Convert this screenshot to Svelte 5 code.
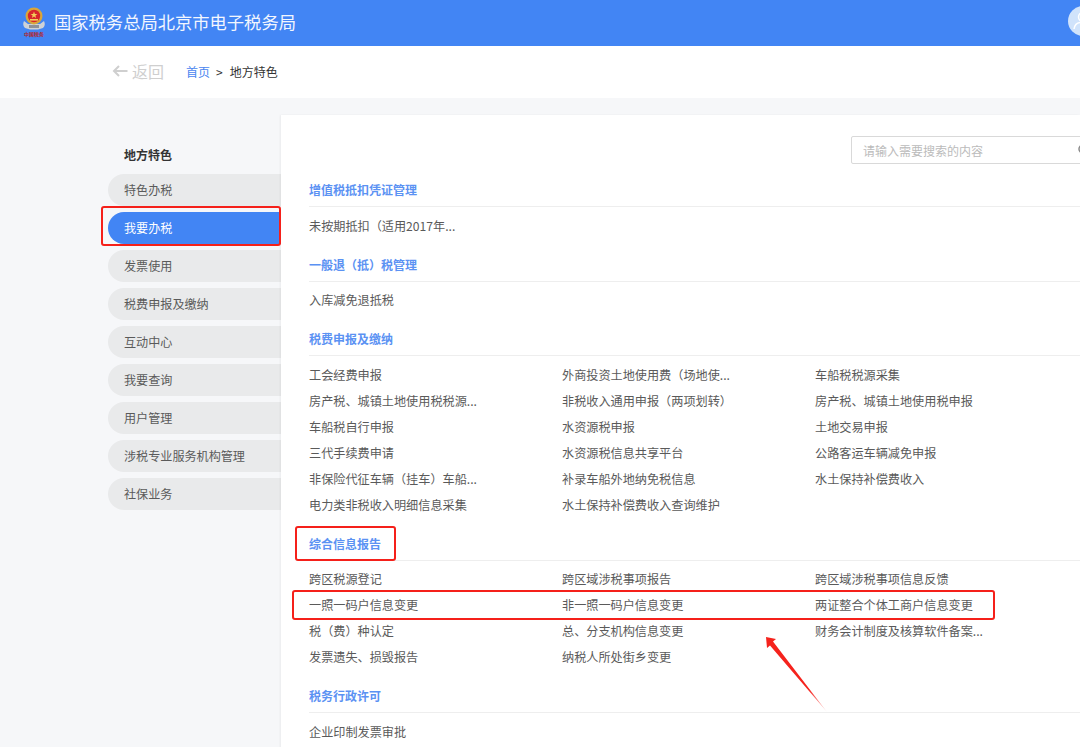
<script>
const menu = ['特色办税', '我要办税', '发票使用', '税费申报及缴纳', '互动中心', '我要查询', '用户管理', '涉税专业服务机构管理', '社保业务'];

const sections = [
  { title: '增值税抵扣凭证管理', items: ['未按期抵扣（适用2017年...'] },
  { title: '一般退（抵）税管理', items: ['入库减免退抵税'] },
  {
    title: '税费申报及缴纳',
    items: [
      '工会经费申报', '外商投资土地使用费（场地使...', '车船税税源采集',
      '房产税、城镇土地使用税税源...', '非税收入通用申报（两项划转）', '房产税、城镇土地使用税申报',
      '车船税自行申报', '水资源税申报', '土地交易申报',
      '三代手续费申请', '水资源税信息共享平台', '公路客运车辆减免申报',
      '非保险代征车辆（挂车）车船...', '补录车船外地纳免税信息', '水土保持补偿费收入',
      '电力类非税收入明细信息采集', '水土保持补偿费收入查询维护'
    ]
  },
  {
    title: '综合信息报告',
    items: [
      '跨区税源登记', '跨区域涉税事项报告', '跨区域涉税事项信息反馈',
      '一照一码户信息变更', '非一照一码户信息变更', '两证整合个体工商户信息变更',
      '税（费）种认定', '总、分支机构信息变更', '财务会计制度及核算软件备案...',
      '发票遗失、损毁报告', '纳税人所处街乡变更'
    ]
  },
  { title: '税务行政许可', items: ['企业印制发票审批'] }
];
</script>

<div class="page">
  <header class="top">
    <svg class="emblem" width="30" height="36" viewBox="0 0 30 36">
      <path d="M5 16 Q3 20 6 23 L11 24.5 L19 24.5 L24 23 Q27 20 25 16 L21 19 L9 19 Z" fill="#cfd2d6" />
      <circle cx="15" cy="11" r="8.5" fill="#d9a63a" />
      <circle cx="15" cy="11" r="6.2" fill="#d8262c" />
      <path d="M15 6.5 L15.9 9 L18.4 9 L16.4 10.5 L17.1 13 L15 11.5 L12.9 13 L13.6 10.5 L11.6 9 L14.1 9 Z" fill="#f3cf5a" />
      <rect x="11" y="14" width="8" height="1.6" fill="#f3cf5a" />
      <rect x="10" y="20" width="10" height="3" fill="#8d9199" />
      <text x="15" y="31" text-anchor="middle" class="emblem-text">中国税务</text>
    </svg>
    <h1>国家税务总局北京市电子税务局</h1>
    <div class="avatar">
      <svg width="30" height="30" viewBox="0 0 30 30">
        <circle cx="15" cy="11" r="4.5" fill="none" stroke="#fff" stroke-width="1.5" />
        <path d="M6 23 Q7 17 12 16.5 M18 16.5 Q23 17 24 23 Z" fill="none" stroke="#fff" stroke-width="1.5" />
      </svg>
    </div>
  </header>

  <div class="crumbs">
    <span class="back">
      <svg width="16" height="12" viewBox="0 0 16 12">
        <path d="M15.5 6 H2 M7 1 L2 6 L7 11" fill="none" stroke="#cfcfcf" stroke-width="2" />
      </svg>
      返回
    </span>
    <span class="path"><a href="#top">首页</a><i>&gt;</i><b>地方特色</b></span>
  </div>

  <main>
    <aside>
      <h2>地方特色</h2>
      {#each menu as name, i}
        <div class="pill" class:active={i === 1}>{name}</div>
      {/each}
    </aside>

    <section class="panel">
      <div class="search">
        <input placeholder="请输入需要搜索的内容" />
        <svg width="10" height="12" viewBox="0 0 10 12">
          <circle cx="6" cy="5" r="4" fill="none" stroke="#888" stroke-width="1.5" />
        </svg>
      </div>

      {#each sections as sec}
        <div class="group">
          <h3>{sec.title}</h3>
          <div class="items">
            {#each sec.items as item}
              <span>{item}</span>
            {/each}
          </div>
        </div>
      {/each}
    </section>
  </main>

  <!-- red marks drawn over the screenshot -->
  <div class="mark mark-menu"></div>
  <div class="mark mark-title"></div>
  <div class="mark mark-row"></div>
  <svg class="arrow" width="70" height="85" viewBox="0 0 70 85">
    <defs>
      <linearGradient id="fade" x1="0" y1="0" x2="1" y2="1">
        <stop offset="0" stop-color="#f5231d" />
        <stop offset="0.7" stop-color="#f5231d" />
        <stop offset="1" stop-color="#f5231d" stop-opacity="0.15" />
      </linearGradient>
    </defs>
    <path d="M1 1 L11 3 L8 5.5 L62 76 L5 9.5 L2 12 Z" fill="url(#fade)" />
  </svg>
</div>

<style>
  :global(body) {
    background: #fff;
    font-family: "Noto Sans CJK SC", "Liberation Sans", sans-serif;
  }

  .page {
    position: relative;
    width: 1080px;
    height: 747px;
    overflow: hidden;
    background: #f6f7f9;
  }

  .top {
    display: flex;
    align-items: center;
    height: 46px;
    padding-left: 19px;
    background: #4285f4;
  }

  .emblem {
    flex: none;
    margin-right: 5px;
  }

  .emblem-text {
    font-family: "Noto Sans CJK SC", sans-serif;
    font-size: 5px;
    font-weight: 700;
    fill: #b5262a;
  }

  h1 {
    margin: -3px 0 0;
    font-size: 17.3px;
    font-weight: 400;
    color: #f2f6fe;
    white-space: nowrap;
  }

  .avatar {
    flex: none;
    width: 30px;
    height: 30px;
    margin-left: auto;
    margin-right: -18px;
    margin-top: -4px;
    border-radius: 50%;
    background: #d0e3fb;
  }

  .crumbs {
    display: flex;
    align-items: center;
    height: 50px;
    padding: 0 0 2px 112px;
    background: #fff;
  }

  .back {
    display: flex;
    align-items: center;
    gap: 4px;
    width: 74px;
    font-size: 16px;
    color: #cfcfcf;
  }

  .path {
    display: flex;
    align-items: center;
    font-size: 12px;
    color: #333;
  }

  .path a {
    color: #4a86f0;
    text-decoration: none;
  }

  .path i {
    margin: 0 7px 0 6px;
    font-style: normal;
  }

  .path b {
    font-weight: 400;
  }

  main {
    display: flex;
    padding-top: 17px;
  }

  aside {
    flex: none;
    width: 281px;
    padding: 31px 0 0 108px;
    box-sizing: border-box;
  }

  h2 {
    margin: 0 0 10px;
    padding-left: 16px;
    font-size: 12px;
    line-height: 18px;
    font-weight: 700;
    color: #333;
  }

  .pill {
    height: 32px;
    margin-bottom: 6px;
    padding-left: 16px;
    border-radius: 16px 0 0 16px;
    font-size: 12.1px;
    line-height: 32px;
    color: #5a5a5a;
    background: #e9eaeb;
  }

  .pill.active {
    color: #fff;
    background: #4285f4;
  }

  .panel {
    flex: 1;
    min-width: 0;
    height: 640px;
    padding-left: 28px;
    background: #fff;
    box-shadow: -1px 0 2px rgba(0, 0, 0, 0.05);
  }

  .search {
    position: relative;
    width: 240px;
    height: 28px;
    margin: 21px 0 11px 542px;
  }

  .search input {
    box-sizing: border-box;
    width: 100%;
    height: 100%;
    padding: 0 11px;
    border: 1px solid #d9d9d9;
    border-radius: 2px;
    font: inherit;
    font-size: 12px;
    outline: none;
  }

  .search input::placeholder {
    color: #bbb;
  }

  .search svg {
    position: absolute;
    left: 226px;
    top: 8px;
  }

  .group {
    margin-bottom: 11.1px;
  }

  h3 {
    margin: 0 0 5.5px;
    height: 31px;
    border-bottom: 1px solid #eee;
    font-size: 12px;
    line-height: 30px;
    font-weight: 700;
    color: #5b92f3;
  }

  .items {
    display: grid;
    grid-template-columns: repeat(3, 253px);
    grid-auto-rows: 26px;
    font-size: 12.15px;
    line-height: 26px;
    color: #5a5a5a;
  }

  .items span {
    white-space: nowrap;
  }

  .mark {
    position: absolute;
    box-sizing: border-box;
    border: 2.5px solid #f5201a;
    border-radius: 3px;
  }

  .mark-menu {
    left: 101px;
    top: 206px;
    width: 180px;
    height: 40px;
  }

  .mark-title {
    left: 295px;
    top: 526px;
    width: 101px;
    height: 35px;
  }

  .mark-row {
    left: 292px;
    top: 590px;
    width: 703px;
    height: 30px;
  }

  .arrow {
    position: absolute;
    left: 765px;
    top: 636px;
  }
</style>
